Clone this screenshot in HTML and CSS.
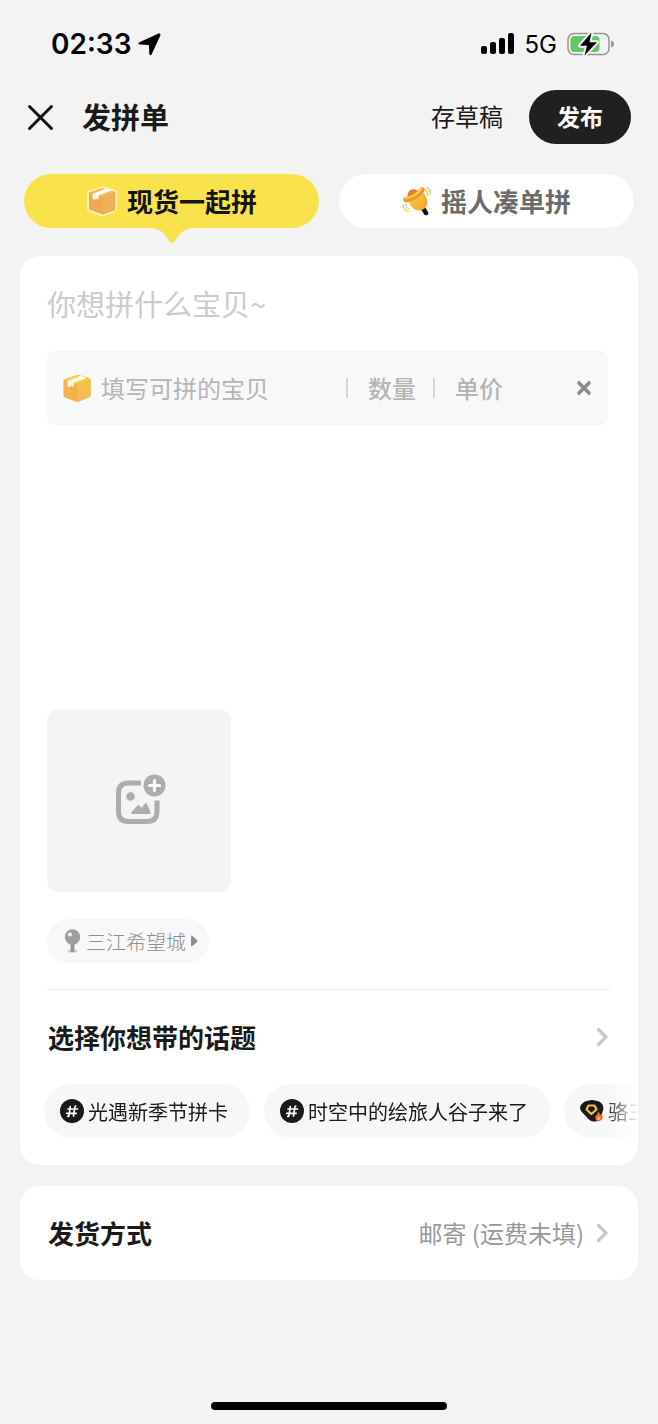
FILE: index.html
```html
<!DOCTYPE html>
<html lang="zh-CN">
<head>
<meta charset="utf-8">
<meta name="viewport" content="width=device-width, initial-scale=1">
<title>发拼单</title>
<link rel="stylesheet" href="styles.css">
</head>
<body>
<svg class="defs" width="0" height="0" aria-hidden="true">
  <defs>
    <linearGradient id="box-front" x1="0" y1="0" x2="1" y2="0"><stop offset="0" stop-color="#f4b445"/><stop offset="1" stop-color="#f0a952"/></linearGradient>
    <linearGradient id="bell-body" x1="0" y1="0" x2="1" y2="1"><stop offset="0" stop-color="#ffd04a"/><stop offset="1" stop-color="#f1a02c"/></linearGradient>
    <symbol id="box" viewBox="0 0 32 32">
      <path d="M1.500 8.500Q1.500 7 3.500 6.300L15 2.300Q17 1.700 19 2.300L28.500 5.300Q30.500 6 30.500 8V23Q30.500 25 28.500 26L18 30.300Q16.500 31 15 30.300L3.500 26.300Q1.500 25.500 1.500 23.500Z" fill="url(#box-front)"/>
      <path d="M16.500 11.500 30.500 7.500V23Q30.500 25 28.500 26L16.500 30.800Z" fill="#f3c04f"/>
      <path d="M1.800 7.500 16 2 30.200 7 16.500 12Z" fill="#fbd03f"/>
      <path d="M6 8.500 20 2.800 26.500 5 12.500 10.500V14.500L10 13.500 8.500 15.500 6 14Z" fill="#fffaf0"/>
    </symbol>
    <symbol id="hash" viewBox="0 0 24 24">
      <circle cx="12" cy="12" r="12" fill="#1a1a1a"/>
      <path d="M10.300 7.500 9 16.500Q8.800 17.500 7.800 17.300M15.800 7Q15 7 14.800 8.500L13.500 17M8 10H17.500M6.700 14.300H16.200" fill="none" stroke="#fff" stroke-width="1.700" stroke-linecap="round"/>
    </symbol>
    <symbol id="chevron" viewBox="0 0 12 20">
      <path d="M2.500 2.500 10 10 2.500 17.500" fill="none" stroke="#c8c8c8" stroke-width="3.200" stroke-linecap="round" stroke-linejoin="round"/>
    </symbol>
  </defs>
</svg>
<div class="screen">
  <div class="status">
    <div class="status-left">
      <span class="time">02:33</span>
      <svg width="23" height="23" viewBox="0 0 23 23"><path d="M20.500.500Q23 0 22.300 2.600L13.800 21Q12.500 23.500 11.300 21L11 13Q11 12 10 12L1.500 11.500Q-1 10.500 1.500 9.300Z"/></svg>
    </div>
    <div class="status-right">
      <svg width="34" height="22" viewBox="0 0 34 22"><rect x="0" y="13" width="6" height="8" rx="2"/><rect x="9" y="9" width="6" height="12" rx="2"/><rect x="18" y="5" width="6" height="16" rx="2"/><rect x="27" y="0" width="6" height="21" rx="2"/></svg>
      <span class="network">5G</span>
      <svg width="48" height="26" viewBox="0 0 48 26"><rect x="1" y="2.500" width="41" height="21" rx="6" fill="none" stroke="#969696" stroke-width="1.500"/><path d="M44 9.500Q47 10.500 47 13T44 16.500Z" fill="#969696"/><rect x="3.500" y="5" width="29" height="16" rx="4" fill="#63c566"/><path d="M24.500 1.500 13 14.800H20L17.500 24.500 30 11.200H22.500Z" fill="#000" stroke="#f3f3f3" stroke-width="4" stroke-linejoin="round" paint-order="stroke"/></svg>
    </div>
  </div>

  <header class="header">
    <button class="icon-button" aria-label="关闭"><svg width="28" height="28" viewBox="0 0 28 28"><path d="M3.500 3.500 25.500 25.500M25.500 3.500 3.500 25.500" fill="none" stroke="#111" stroke-width="3" stroke-linecap="round"/></svg></button>
    <h1 class="title">发拼单</h1>
    <button class="draft">存草稿</button>
    <button class="publish">发布</button>
  </header>

  <div class="tabs" role="tablist">
    <button class="tab tab-active" role="tab" aria-selected="true">
      <svg width="32" height="32" viewBox="0 0 32 32"><path d="M2 8.500Q2 7 4 6.300L15 2.800Q17 2.200 19 2.800L28 5.600Q30 6.300 30 8V23Q30 25 28 26L18 30Q16.500 30.600 15 30L4 26Q2 25.300 2 23.500Z" fill="#eea94f" stroke="#fff1ae" stroke-width="2" stroke-linejoin="round"/><path d="M16.500 11.500 29.300 7.500V23Q29.300 25 27.500 25.800L16.500 29.800Z" fill="#efae57"/><path d="M3 7.500 16 3 29 7 16.500 11.800Z" fill="#f3bd5c"/><path d="M6.500 9 20 3.500 26 5.300 12.500 10.500V14.500L10 13.500 8.500 15 6.500 13.500Z" fill="#fffaf0"/></svg>
      <span>现货一起拼</span>
      <svg class="tab-tail" width="46" height="17" viewBox="0 0 46 17"><path d="M0 0H46V1C36 1 31 5 26 14Q23 18 20 14C15 5 10 1 0 1Z" fill="#f8e34c"/></svg>
    </button>
    <button class="tab" role="tab" aria-selected="false">
      <svg width="30" height="30" viewBox="0 0 30 30"><path d="M21.500 23 24 27" stroke="#111" stroke-width="4.500" stroke-linecap="round"/><path d="M5.500 10Q6 4.500 9.500 3.500T16 5L9 11Z" fill="#ed7636"/><path d="M6 15 21.500 6.500Q23.500 9 25 13.500Q26.500 19 22.500 22.500Q17.500 26 12 23Q8.500 20.500 6 15Z" fill="url(#bell-body)"/><path d="M4 13.500Q8 13.500 13 10.500T20 4" fill="none" stroke="#f0982d" stroke-width="5.500" stroke-linecap="round"/><path d="M3.300 12Q8 12 12.500 9T19 2.800" fill="none" stroke="#ffca50" stroke-width="2.600" stroke-linecap="round"/><path d="M23.500 4Q26.500 6 25.500 9.500M25 1.500Q29.500 4.500 28 9M3.500 18Q4 21.500 7 23M1 18.500Q1.500 24 6.500 25.500" fill="none" stroke="#f5cc59" stroke-width="1.300" stroke-linecap="round"/></svg>
      <span>摇人凑单拼</span>
    </button>
  </div>

  <main class="cards">
    <section class="card editor">
      <div class="editor-body">
        <textarea class="desc" rows="1" aria-label="描述" placeholder="你想拼什么宝贝~"></textarea>
        <div class="item">
          <svg width="30" height="30"><use href="#box"/></svg>
          <input class="field field-name" aria-label="宝贝" placeholder="填写可拼的宝贝">
          <span class="sep"></span>
          <input class="field field-short" aria-label="数量" placeholder="数量">
          <span class="sep"></span>
          <input class="field field-short" aria-label="单价" placeholder="单价">
          <button class="icon-button item-remove" aria-label="删除"><svg width="16" height="16" viewBox="0 0 16 16"><path d="M3 3 13 13M13 3 3 13" fill="none" stroke="#8b8b8b" stroke-width="3.600" stroke-linecap="round"/></svg></button>
        </div>
        <button class="photo" aria-label="添加图片">
          <svg width="54" height="54" viewBox="0 0 54 54"><path d="M29 9H16.500Q6.500 9 6.500 19V37.500Q6.500 47.500 16.500 47.500H35Q45 47.500 45 37.500V26.500" fill="none" stroke="#adadad" stroke-width="5"/><circle cx="18.500" cy="22.500" r="4.300" fill="#adadad"/><path d="M19.500 38 25.500 31.500Q26.500 30.500 27.500 31.500L29.500 34 33 29.500Q34 28.500 35 30L38.500 38Q39 40 37.500 40H20.500Q18.500 40 19.500 38Z" fill="#adadad"/><circle cx="42.500" cy="11.500" r="11" fill="#adadad"/><path d="M42.500 6.500V16.500M37.500 11.500H47.500" stroke="#fff" stroke-width="3.200" stroke-linecap="round"/></svg>
        </button>
        <button class="place">
          <svg width="17" height="24" viewBox="0 0 17 24"><ellipse cx="8.500" cy="22" rx="5" ry="1.500" fill="#cfcfcf"/><path d="M8.500 12V21.500" stroke="#999" stroke-width="4" stroke-linecap="round"/><circle cx="8.500" cy="8" r="7.700" fill="#9e9e9e"/><circle cx="6" cy="5.500" r="2" fill="#f4f4f4"/></svg>
          <span>三江希望城</span>
          <svg width="7" height="12" viewBox="0 0 7 12"><path d="M0 1.500Q0 0 1.500 1L6 5Q7 6 6 7L1.500 11Q0 12 0 10.500Z" fill="#8f8f8f"/></svg>
        </button>
        <hr class="divider">
        <div class="row topics-head">
          <h2 class="label">选择你想带的话题</h2>
          <button class="icon-button" aria-label="更多话题"><svg width="12" height="20"><use href="#chevron"/></svg></button>
        </div>
      </div>
      <div class="chips">
        <button class="chip"><svg width="24" height="24"><use href="#hash"/></svg><span>光遇新季节拼卡</span></button>
        <button class="chip"><svg width="24" height="24"><use href="#hash"/></svg><span>时空中的绘旅人谷子来了</span></button>
        <button class="chip"><svg width="24" height="24" viewBox="0 0 24 24"><path d="M5 2.500Q12-.500 19 2.500 24.500 5.500 23 11.500L21 17Q19 23 14 22.500 10 22.500 7 18.500L1 12Q-2 6.500 5 2.500Z" fill="#1a1a1a"/><path d="M8.500 6.500H14.500L16.500 10.500 11.500 15 6.500 10.500Z" fill="#1a1a1a" stroke="#f2bd4e" stroke-width="2.200" stroke-linejoin="round"/><path d="M18.500 12.500Q20 14 20 16L22 14.500Q23.500 18 22 20.500 19 23.500 16 21 14 18 17 15.500Z" fill="#f26b2c"/><path d="M18.500 17 20.500 20Q18.500 22 17 20Z" fill="#ffb347"/></svg><span>骆三</span></button>
      </div>
    </section>

    <section class="card row delivery">
      <h2 class="label">发货方式</h2>
      <button class="delivery-value"><span>邮寄 (运费未填)</span><svg width="12" height="20"><use href="#chevron"/></svg></button>
    </section>
  </main>
  <div class="home"></div>
</div>
</body>
</html>
```
FILE: styles.css
```css
* { box-sizing: border-box; }

body {
  margin: 0;
  background: #f3f3f3;
  color: #1a1a1a;
  font-family: "Noto Sans CJK SC", "Noto Sans", sans-serif;
}

button, input, textarea {
  margin: 0;
  padding: 0;
  border: 0;
  background: none;
  color: inherit;
  font: inherit;
}

h1, h2 { margin: 0; }
svg { display: block; flex-shrink: 0; }
.defs { position: absolute; }

.screen {
  display: flex;
  flex-direction: column;
  min-height: 100vh;
}

.status {
  display: flex;
  justify-content: space-between;
  align-items: center;
  height: 90px;
  padding: 0 43px 2px 51px;
  font-family: Inter, sans-serif;
  color: #000;
}
.status-left { display: flex; align-items: center; gap: 7px; }
.status-right { display: flex; align-items: center; gap: 10px; }
.time { font-size: 28px; font-weight: 600; }
.network { font-size: 24px; font-weight: 400; }

.header {
  display: flex;
  align-items: center;
  padding: 0 27px 0 26px;
}
.icon-button { display: flex; align-items: center; justify-content: center; }
.title {
  flex: 1;
  margin-left: 28px;
  padding-bottom: 2px;
  font-size: 29px;
  line-height: 40px;
  font-weight: 700;
}
.draft { padding-bottom: 2px; font-size: 24px; line-height: 36px; }
.publish {
  margin-left: 26px;
  padding: 0 28px 2px;
  border-radius: 27px;
  background: #202020;
  color: #fff;
  font-size: 23px;
  line-height: 52px;
  font-weight: 700;
}

.tabs {
  display: flex;
  gap: 20px;
  padding: 30px 24px 28px;
}
.tab {
  position: relative;
  flex: 1;
  display: flex;
  align-items: center;
  justify-content: center;
  gap: 9px;
  border-radius: 27px;
  background: #fff;
  color: #6b6b6b;
  font-size: 26px;
  line-height: 54px;
  font-weight: 700;
}
.tab-active { background: #f8e34c; color: #151515; }
.tab-tail {
  position: absolute;
  top: 100%;
  left: 50%;
  margin: -1px 0 0 -23px;
}

.cards {
  display: flex;
  flex-direction: column;
  gap: 21px;
  padding: 0 20px;
}
.card { border-radius: 20px; background: #fff; }
.editor { padding-bottom: 27px; overflow: hidden; }
.editor-body {
  display: flex;
  flex-direction: column;
  align-items: flex-start;
  padding: 25px 27px 0;
}
.desc {
  width: 100%;
  height: 44px;
  font-size: 29px;
  line-height: 44px;
  resize: none;
  overflow: hidden;
}
.desc::placeholder { color: #cbcbcb; }

.item {
  display: flex;
  align-items: center;
  align-self: stretch;
  height: 74px;
  margin: 26px 3px 0 0;
  padding: 0 16px 0 15px;
  border-radius: 8px;
  background: #f8f8f8;
}
.field { min-width: 0; height: 36px; font-size: 24px; line-height: 36px; }
.field::placeholder { color: #b5b5b5; }
.field-name { flex: 1; margin-left: 9px; }
.field-short { width: 48px; margin: 0 17px 0 20px; font-weight: 500; }
.sep { width: 2px; height: 20px; background: #d5d5d5; }
.item-remove { margin-left: 56px; }

.photo {
  display: flex;
  align-items: center;
  justify-content: center;
  width: 184px;
  height: 183px;
  margin-top: 284px;
  border-radius: 12px;
  background: #f4f4f4;
}
.place {
  display: flex;
  align-items: center;
  gap: 5px;
  height: 44px;
  margin-top: 27px;
  padding: 0 11px 0 17px;
  border-radius: 22px;
  background: #f8f8f8;
  color: #8f8f8f;
  font-size: 20px;
  font-weight: 300;
}
.divider {
  align-self: stretch;
  height: 1px;
  margin: 26px 0 0;
  border: 0;
  background: #eee;
}
.row { display: flex; align-items: center; justify-content: space-between; }
.topics-head { align-self: stretch; padding: 27px 3px 27px 1px; }
.label { font-size: 26px; line-height: 40px; font-weight: 700; }

.chips {
  display: flex;
  gap: 14px;
  padding-left: 24px;
  overflow: hidden;
  mask-image: linear-gradient(to right, #000 calc(100% - 32px), transparent);
}
.chip {
  display: flex;
  flex-shrink: 0;
  align-items: center;
  gap: 4px;
  height: 54px;
  padding: 0 22px 0 16px;
  border-radius: 27px;
  background: #f7f7f7;
  font-size: 20px;
}

.delivery { padding: 27px 30px 27px 28px; }
.delivery-value {
  display: flex;
  align-items: center;
  gap: 12px;
  color: #999;
  font-size: 24px;
  line-height: 36px;
}

.home {
  width: 36%;
  height: 8px;
  margin: auto auto 14px;
  border-radius: 4px;
  background: #000;
}
```
